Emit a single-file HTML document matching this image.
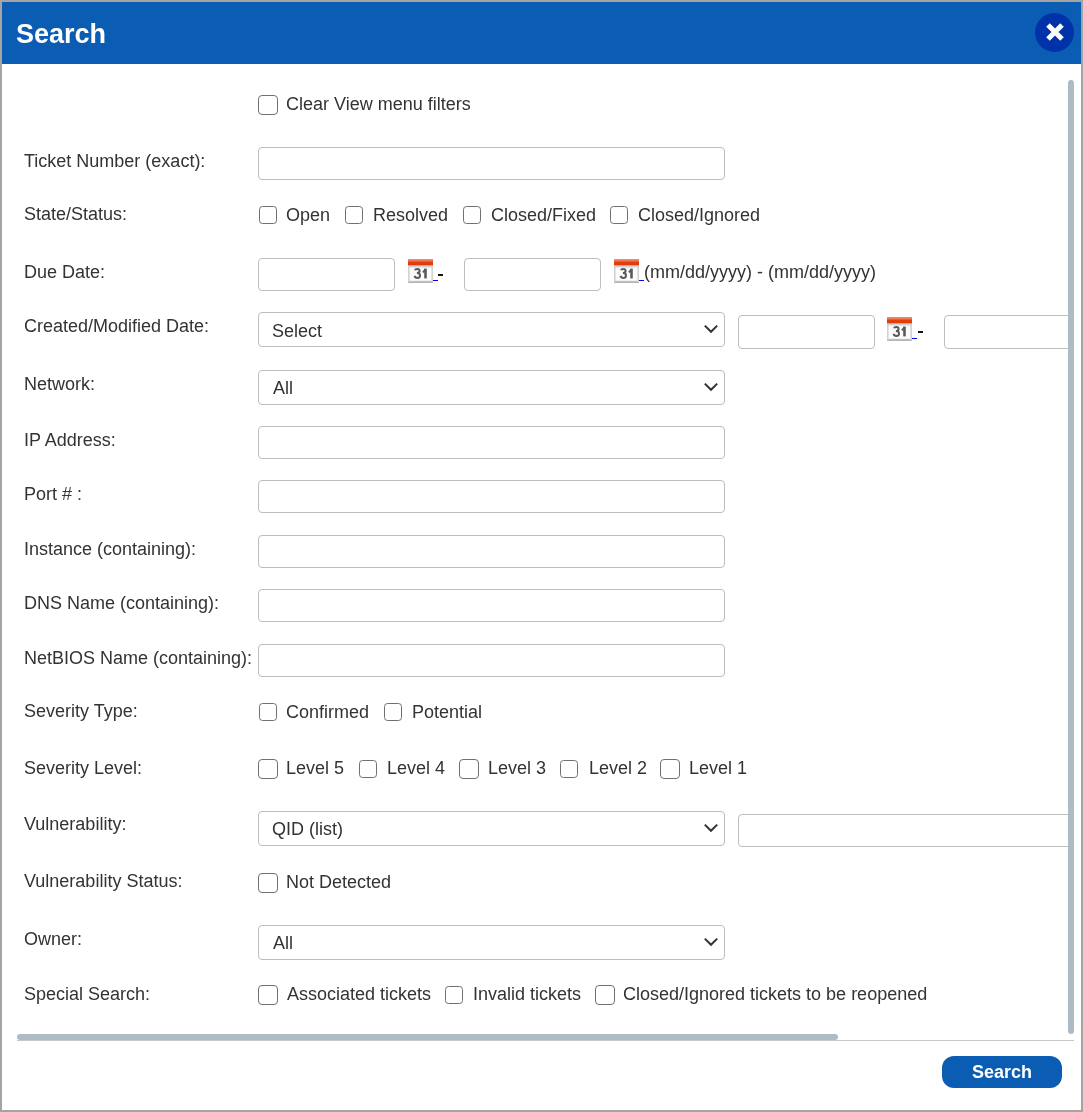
<!DOCTYPE html>
<html><head><meta charset="utf-8">
<style>
*{box-sizing:border-box}
html,body{margin:0;padding:0;background:#fff;width:1083px;height:1112px;overflow:hidden}
body{position:relative;font-family:"Liberation Sans",sans-serif;color:#333}
.frame{position:absolute;left:0;top:0;width:1083px;height:1112px;border:2px solid #a4a4a4}
.hdr{position:absolute;left:2px;top:2px;width:1079px;height:62px;background:#0b5db4}
.title{position:absolute;left:16px;top:19px;font:bold 27px/30px "Liberation Sans",sans-serif;color:#fff}
.close{position:absolute;left:1035px;top:13px;width:39px;height:39px;border-radius:50%;background:#0033aa}
.close svg{position:absolute;left:0;top:0}
.clip{position:absolute;left:2px;top:64px;width:1066px;height:970px;overflow:hidden}
.clip>*{margin-left:-2px;margin-top:-64px}
.lbl,.t,.sel span,.title,.btn{will-change:transform}
.lbl{position:absolute;left:24px;font-size:18px;line-height:20px;white-space:nowrap}
.t{position:absolute;font-size:18px;line-height:20px;white-space:nowrap}
.hy{position:absolute;width:5px;height:2px;background:#151515}
.cb{position:absolute;width:18px;height:18px;border:1.5px solid #707070;border-radius:3.5px;background:#fff}
.cb.big{width:19.5px;height:19.5px;border-width:1.8px;border-radius:4px}
.in{position:absolute;border:1px solid #bdbdbd;border-radius:4px;background:#fff}
.sel{position:absolute;border:1px solid #bdbdbd;border-radius:4px;background:#fff;left:258px;width:467px}
.sel span{position:absolute;left:13px;top:8px;font-size:18px;line-height:20px;color:#333;white-space:nowrap}
.sel svg{position:absolute;left:444px;top:11px}
.cal{position:absolute}
.ul{position:absolute;width:5px;height:1px;background:#0000ee}
.vs{position:absolute;left:1068px;top:80px;width:6px;height:954px;border-radius:3px;background:#adbbc4}
.hs{position:absolute;left:17px;top:1034px;width:821px;height:6px;border-radius:3px;background:#adbbc4}
.sep{position:absolute;left:17px;top:1040px;width:1057px;height:1px;background:#c6c6c6}
.btn{position:absolute;left:942px;top:1056px;width:120px;height:32px;border-radius:12px;background:#0b5db4;color:#fff;font:bold 18px/32px "Liberation Sans",sans-serif;text-align:center}
</style></head><body>
<div class="frame"></div>
<div class="hdr"></div>
<div class="title">Search</div>
<div class="close"><svg width="39" height="39" viewBox="0 0 39 39"><path d="M13 12 L27 26 M27 12 L13 26" stroke="#fff" stroke-width="5"/></svg></div>
<div class="clip"><div style="position:relative;width:1083px;height:1112px">
<div class="cb big" style="left:258px;top:95px"></div>
<div class="t" style="left:285.5px;top:94px">Clear View menu filters</div>
<div class="lbl" style="top:151px">Ticket Number (exact):</div>
<div class="in" style="left:258px;top:147px;width:467px;height:33px"></div>
<div class="lbl" style="top:204px">State/Status:</div>
<div class="cb" style="left:259px;top:206px"></div>
<div class="t" style="left:285.5px;top:205px">Open</div>
<div class="cb" style="left:345px;top:206px"></div>
<div class="t" style="left:372.5px;top:205px">Resolved</div>
<div class="cb" style="left:463px;top:206px"></div>
<div class="t" style="left:490.5px;top:205px">Closed/Fixed</div>
<div class="cb" style="left:610px;top:206px"></div>
<div class="t" style="left:637.5px;top:205px">Closed/Ignored</div>
<div class="lbl" style="top:262px">Due Date:</div>
<div class="in" style="left:258px;top:258px;width:137px;height:33px"></div>
<svg class="cal" style="left:408px;top:259px" width="25" height="24" viewBox="0 0 25 24"><defs><linearGradient id="g1" x1="0" y1="0" x2="0" y2="1"><stop offset="0" stop-color="#f08f78"/><stop offset="0.25" stop-color="#ee7a5c"/><stop offset="0.55" stop-color="#e53e0c"/><stop offset="1" stop-color="#e33a08"/></linearGradient><linearGradient id="w1" x1="0" y1="0" x2="0" y2="1"><stop offset="0" stop-color="#a8acac"/><stop offset="0.1" stop-color="#d8dcdc"/><stop offset="0.2" stop-color="#fbfbfb"/><stop offset="0.85" stop-color="#fdfdfd"/><stop offset="0.9" stop-color="#c4c4c4"/><stop offset="1" stop-color="#b0b0b0"/></linearGradient></defs><rect x="0" y="6" width="25" height="18" fill="url(#w1)"/><rect x="0" y="7" width="1.6" height="16" fill="#d2d2d2"/><rect x="23.4" y="7" width="1.6" height="16" fill="#d2d2d2"/><rect x="0" y="0" width="25" height="6.1" fill="url(#g1)"/><g fill="none" stroke="#5a5a5a"><path d="M6.9 11.3 C7.3 10.0 8.3 9.9 9.3 9.9 C10.7 9.9 11.6 10.6 11.6 11.8 C11.6 13.0 10.7 14.0 8.9 14.0 C10.8 14.0 12.0 14.8 12.0 16.4 C12.0 18.0 10.8 18.9 9.3 18.9 C7.9 18.9 6.9 18.2 6.5 16.9" stroke-width="2"/><path d="M17.5 9.6 L17.5 19.4" stroke-width="2.6"/><path d="M14.7 13.2 C16.0 12.6 17.0 11.6 17.4 10.0" stroke-width="2"/></g></svg>
<div class="ul" style="left:433px;top:280px"></div>
<div class="hy" style="left:438px;top:274px"></div>
<div class="in" style="left:464px;top:258px;width:137px;height:33px"></div>
<svg class="cal" style="left:614px;top:259px" width="25" height="24" viewBox="0 0 25 24"><defs><linearGradient id="g2" x1="0" y1="0" x2="0" y2="1"><stop offset="0" stop-color="#f08f78"/><stop offset="0.25" stop-color="#ee7a5c"/><stop offset="0.55" stop-color="#e53e0c"/><stop offset="1" stop-color="#e33a08"/></linearGradient><linearGradient id="w2" x1="0" y1="0" x2="0" y2="1"><stop offset="0" stop-color="#a8acac"/><stop offset="0.1" stop-color="#d8dcdc"/><stop offset="0.2" stop-color="#fbfbfb"/><stop offset="0.85" stop-color="#fdfdfd"/><stop offset="0.9" stop-color="#c4c4c4"/><stop offset="1" stop-color="#b0b0b0"/></linearGradient></defs><rect x="0" y="6" width="25" height="18" fill="url(#w2)"/><rect x="0" y="7" width="1.6" height="16" fill="#d2d2d2"/><rect x="23.4" y="7" width="1.6" height="16" fill="#d2d2d2"/><rect x="0" y="0" width="25" height="6.1" fill="url(#g2)"/><g fill="none" stroke="#5a5a5a"><path d="M6.9 11.3 C7.3 10.0 8.3 9.9 9.3 9.9 C10.7 9.9 11.6 10.6 11.6 11.8 C11.6 13.0 10.7 14.0 8.9 14.0 C10.8 14.0 12.0 14.8 12.0 16.4 C12.0 18.0 10.8 18.9 9.3 18.9 C7.9 18.9 6.9 18.2 6.5 16.9" stroke-width="2"/><path d="M17.5 9.6 L17.5 19.4" stroke-width="2.6"/><path d="M14.7 13.2 C16.0 12.6 17.0 11.6 17.4 10.0" stroke-width="2"/></g></svg>
<div class="ul" style="left:639px;top:280px"></div>
<div class="t" style="left:643.5px;top:262px">(mm/dd/yyyy) - (mm/dd/yyyy)</div>
<div class="lbl" style="top:316px">Created/Modified Date:</div>
<div class="sel" style="top:312px;height:35px"><span style="left:13px;top:8px">Select</span><svg width="16" height="10" viewBox="0 0 16 10"><path d="M1.8 1.6 L8 7.8 L14.2 1.6" fill="none" stroke="#333" stroke-width="2"/></svg></div>
<div class="in" style="left:738px;top:315px;width:137px;height:34px"></div>
<svg class="cal" style="left:887px;top:317px" width="25" height="24" viewBox="0 0 25 24"><defs><linearGradient id="g3" x1="0" y1="0" x2="0" y2="1"><stop offset="0" stop-color="#f08f78"/><stop offset="0.25" stop-color="#ee7a5c"/><stop offset="0.55" stop-color="#e53e0c"/><stop offset="1" stop-color="#e33a08"/></linearGradient><linearGradient id="w3" x1="0" y1="0" x2="0" y2="1"><stop offset="0" stop-color="#a8acac"/><stop offset="0.1" stop-color="#d8dcdc"/><stop offset="0.2" stop-color="#fbfbfb"/><stop offset="0.85" stop-color="#fdfdfd"/><stop offset="0.9" stop-color="#c4c4c4"/><stop offset="1" stop-color="#b0b0b0"/></linearGradient></defs><rect x="0" y="6" width="25" height="18" fill="url(#w3)"/><rect x="0" y="7" width="1.6" height="16" fill="#d2d2d2"/><rect x="23.4" y="7" width="1.6" height="16" fill="#d2d2d2"/><rect x="0" y="0" width="25" height="6.1" fill="url(#g3)"/><g fill="none" stroke="#5a5a5a"><path d="M6.9 11.3 C7.3 10.0 8.3 9.9 9.3 9.9 C10.7 9.9 11.6 10.6 11.6 11.8 C11.6 13.0 10.7 14.0 8.9 14.0 C10.8 14.0 12.0 14.8 12.0 16.4 C12.0 18.0 10.8 18.9 9.3 18.9 C7.9 18.9 6.9 18.2 6.5 16.9" stroke-width="2"/><path d="M17.5 9.6 L17.5 19.4" stroke-width="2.6"/><path d="M14.7 13.2 C16.0 12.6 17.0 11.6 17.4 10.0" stroke-width="2"/></g></svg>
<div class="ul" style="left:912px;top:338px"></div>
<div class="hy" style="left:918px;top:331px"></div>
<div class="in" style="left:944px;top:315px;width:137px;height:34px"></div>
<div class="lbl" style="top:374px">Network:</div>
<div class="sel" style="top:370px;height:35px"><span style="left:14px;top:7px">All</span><svg width="16" height="10" viewBox="0 0 16 10"><path d="M1.8 1.6 L8 7.8 L14.2 1.6" fill="none" stroke="#333" stroke-width="2"/></svg></div>
<div class="lbl" style="top:430px">IP Address:</div>
<div class="in" style="left:258px;top:426px;width:467px;height:33px"></div>
<div class="lbl" style="top:484px">Port # :</div>
<div class="in" style="left:258px;top:480px;width:467px;height:33px"></div>
<div class="lbl" style="top:539px">Instance (containing):</div>
<div class="in" style="left:258px;top:535px;width:467px;height:33px"></div>
<div class="lbl" style="top:593px">DNS Name (containing):</div>
<div class="in" style="left:258px;top:589px;width:467px;height:33px"></div>
<div class="lbl" style="top:648px">NetBIOS Name (containing):</div>
<div class="in" style="left:258px;top:644px;width:467px;height:33px"></div>
<div class="lbl" style="top:701px">Severity Type:</div>
<div class="cb" style="left:259px;top:703px"></div>
<div class="t" style="left:285.5px;top:702px">Confirmed</div>
<div class="cb" style="left:384px;top:703px"></div>
<div class="t" style="left:411.5px;top:702px">Potential</div>
<div class="lbl" style="top:758px">Severity Level:</div>
<div class="cb big" style="left:258px;top:759px"></div>
<div class="t" style="left:285.5px;top:758px">Level 5</div>
<div class="cb" style="left:359px;top:760px"></div>
<div class="t" style="left:386.5px;top:758px">Level 4</div>
<div class="cb big" style="left:459px;top:759px"></div>
<div class="t" style="left:487.5px;top:758px">Level 3</div>
<div class="cb" style="left:560px;top:760px"></div>
<div class="t" style="left:588.5px;top:758px">Level 2</div>
<div class="cb big" style="left:660px;top:759px"></div>
<div class="t" style="left:688.5px;top:758px">Level 1</div>
<div class="lbl" style="top:814px">Vulnerability:</div>
<div class="sel" style="top:811px;height:35px"><span style="left:13px;top:7px">QID (list)</span><svg width="16" height="10" viewBox="0 0 16 10"><path d="M1.8 1.6 L8 7.8 L14.2 1.6" fill="none" stroke="#333" stroke-width="2"/></svg></div>
<div class="in" style="left:738px;top:814px;width:345px;height:33px"></div>
<div class="lbl" style="top:871px">Vulnerability Status:</div>
<div class="cb big" style="left:258px;top:873px"></div>
<div class="t" style="left:285.5px;top:872px">Not Detected</div>
<div class="lbl" style="top:929px">Owner:</div>
<div class="sel" style="top:925px;height:35px"><span style="left:14px;top:7px">All</span><svg width="16" height="10" viewBox="0 0 16 10"><path d="M1.8 1.6 L8 7.8 L14.2 1.6" fill="none" stroke="#333" stroke-width="2"/></svg></div>
<div class="lbl" style="top:984px">Special Search:</div>
<div class="cb big" style="left:258px;top:985px"></div>
<div class="t" style="left:286.5px;top:984px">Associated tickets</div>
<div class="cb" style="left:445px;top:986px"></div>
<div class="t" style="left:472.5px;top:984px">Invalid tickets</div>
<div class="cb big" style="left:595px;top:985px"></div>
<div class="t" style="left:622.5px;top:984px">Closed/Ignored tickets to be reopened</div>
</div></div>
<div class="vs"></div>
<div class="hs"></div>
<div class="sep"></div>
<div class="btn">Search</div>
</body></html>
